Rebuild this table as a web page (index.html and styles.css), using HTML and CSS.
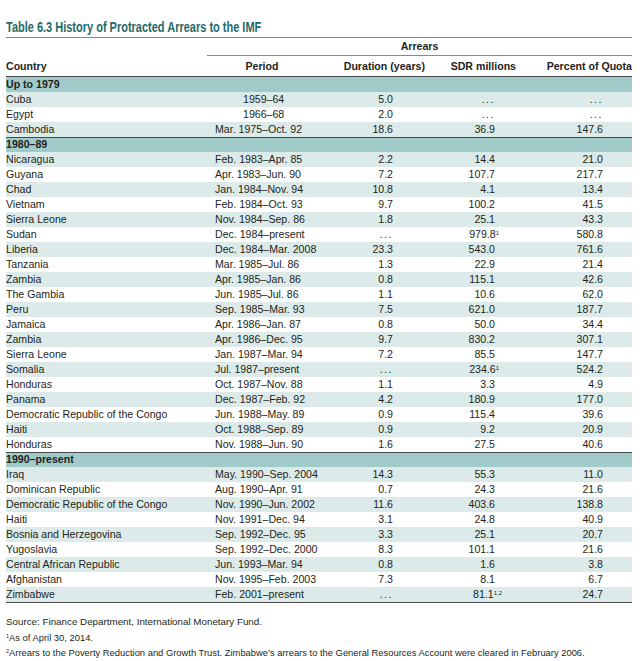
FILE: index.html
```html
<!DOCTYPE html>
<html lang="en">
<head>
    <meta charset="UTF-8">
    <meta name="viewport" content="width=device-width, initial-scale=1.0">
    <title>Table 6.3 History of Protracted Arrears to the IMF</title>
    <link rel="stylesheet" href="styles.css">
</head>
<body>
    <div class="page">
        <h1 class="title"><span class="title-text">Table 6.3 History of Protracted Arrears to the IMF</span></h1>

        <table class="arrears">
            <colgroup>
                <col class="col-country">
                <col class="col-period">
                <col class="col-duration">
                <col class="col-sdr">
                <col class="col-quota">
            </colgroup>
            <thead>
                <tr class="group-head">
                    <th></th>
                    <th colspan="4" class="arrears-label">Arrears</th>
                </tr>
                <tr class="col-head">
                    <th class="country">Country</th>
                    <th class="period-head">Period</th>
                    <th class="duration-head">Duration (years)</th>
                    <th class="sdr-head">SDR millions</th>
                    <th class="quota-head">Percent of Quota</th>
                </tr>
            </thead>
            <tbody class="group first">
                <tr class="section"><td colspan="5">Up to 1979</td></tr>
                <tr><td>Cuba</td><td class="period short">1959–64</td><td class="duration">5.0</td><td class="sdr"><span class="na">...</span></td><td class="quota"><span class="na">...</span></td></tr>
                <tr><td>Egypt</td><td class="period short">1966–68</td><td class="duration">2.0</td><td class="sdr"><span class="na">...</span></td><td class="quota"><span class="na">...</span></td></tr>
                <tr><td>Cambodia</td><td class="period">Mar. 1975–Oct. 92</td><td class="duration">18.6</td><td class="sdr">36.9</td><td class="quota">147.6</td></tr>
            </tbody>
            <tbody class="group">
                <tr class="section"><td colspan="5">1980–89</td></tr>
                <tr><td>Nicaragua</td><td class="period">Feb. 1983–Apr. 85</td><td class="duration">2.2</td><td class="sdr">14.4</td><td class="quota">21.0</td></tr>
                <tr><td>Guyana</td><td class="period">Apr. 1983–Jun. 90</td><td class="duration">7.2</td><td class="sdr">107.7</td><td class="quota">217.7</td></tr>
                <tr><td>Chad</td><td class="period">Jan. 1984–Nov. 94</td><td class="duration">10.8</td><td class="sdr">4.1</td><td class="quota">13.4</td></tr>
                <tr><td>Vietnam</td><td class="period">Feb. 1984–Oct. 93</td><td class="duration">9.7</td><td class="sdr">100.2</td><td class="quota">41.5</td></tr>
                <tr><td>Sierra Leone</td><td class="period">Nov. 1984–Sep. 86</td><td class="duration">1.8</td><td class="sdr">25.1</td><td class="quota">43.3</td></tr>
                <tr><td>Sudan</td><td class="period">Dec. 1984–present</td><td class="duration"><span class="na">...</span></td><td class="sdr">979.8<sup class="fn">1</sup></td><td class="quota">580.8</td></tr>
                <tr><td>Liberia</td><td class="period">Dec. 1984–Mar. 2008</td><td class="duration">23.3</td><td class="sdr">543.0</td><td class="quota">761.6</td></tr>
                <tr><td>Tanzania</td><td class="period">Mar. 1985–Jul. 86</td><td class="duration">1.3</td><td class="sdr">22.9</td><td class="quota">21.4</td></tr>
                <tr><td>Zambia</td><td class="period">Apr. 1985–Jan. 86</td><td class="duration">0.8</td><td class="sdr">115.1</td><td class="quota">42.6</td></tr>
                <tr><td>The Gambia</td><td class="period">Jun. 1985–Jul. 86</td><td class="duration">1.1</td><td class="sdr">10.6</td><td class="quota">62.0</td></tr>
                <tr><td>Peru</td><td class="period">Sep. 1985–Mar. 93</td><td class="duration">7.5</td><td class="sdr">621.0</td><td class="quota">187.7</td></tr>
                <tr><td>Jamaica</td><td class="period">Apr. 1986–Jan. 87</td><td class="duration">0.8</td><td class="sdr">50.0</td><td class="quota">34.4</td></tr>
                <tr><td>Zambia</td><td class="period">Apr. 1986–Dec. 95</td><td class="duration">9.7</td><td class="sdr">830.2</td><td class="quota">307.1</td></tr>
                <tr><td>Sierra Leone</td><td class="period">Jan. 1987–Mar. 94</td><td class="duration">7.2</td><td class="sdr">85.5</td><td class="quota">147.7</td></tr>
                <tr><td>Somalia</td><td class="period">Jul. 1987–present</td><td class="duration"><span class="na">...</span></td><td class="sdr">234.6<sup class="fn">1</sup></td><td class="quota">524.2</td></tr>
                <tr><td>Honduras</td><td class="period">Oct. 1987–Nov. 88</td><td class="duration">1.1</td><td class="sdr">3.3</td><td class="quota">4.9</td></tr>
                <tr><td>Panama</td><td class="period">Dec. 1987–Feb. 92</td><td class="duration">4.2</td><td class="sdr">180.9</td><td class="quota">177.0</td></tr>
                <tr><td>Democratic Republic of the Congo</td><td class="period">Jun. 1988–May. 89</td><td class="duration">0.9</td><td class="sdr">115.4</td><td class="quota">39.6</td></tr>
                <tr><td>Haiti</td><td class="period">Oct. 1988–Sep. 89</td><td class="duration">0.9</td><td class="sdr">9.2</td><td class="quota">20.9</td></tr>
                <tr><td>Honduras</td><td class="period">Nov. 1988–Jun. 90</td><td class="duration">1.6</td><td class="sdr">27.5</td><td class="quota">40.6</td></tr>
            </tbody>
            <tbody class="group last">
                <tr class="section"><td colspan="5">1990–present</td></tr>
                <tr><td>Iraq</td><td class="period">May. 1990–Sep. 2004</td><td class="duration">14.3</td><td class="sdr">55.3</td><td class="quota">11.0</td></tr>
                <tr><td>Dominican Republic</td><td class="period">Aug. 1990–Apr. 91</td><td class="duration">0.7</td><td class="sdr">24.3</td><td class="quota">21.6</td></tr>
                <tr><td>Democratic Republic of the Congo</td><td class="period">Nov. 1990–Jun. 2002</td><td class="duration">11.6</td><td class="sdr">403.6</td><td class="quota">138.8</td></tr>
                <tr><td>Haiti</td><td class="period">Nov. 1991–Dec. 94</td><td class="duration">3.1</td><td class="sdr">24.8</td><td class="quota">40.9</td></tr>
                <tr><td>Bosnia and Herzegovina</td><td class="period">Sep. 1992–Dec. 95</td><td class="duration">3.3</td><td class="sdr">25.1</td><td class="quota">20.7</td></tr>
                <tr><td>Yugoslavia</td><td class="period">Sep. 1992–Dec. 2000</td><td class="duration">8.3</td><td class="sdr">101.1</td><td class="quota">21.6</td></tr>
                <tr><td>Central African Republic</td><td class="period">Jun. 1993–Mar. 94</td><td class="duration">0.8</td><td class="sdr">1.6</td><td class="quota">3.8</td></tr>
                <tr><td>Afghanistan</td><td class="period">Nov. 1995–Feb. 2003</td><td class="duration">7.3</td><td class="sdr">8.1</td><td class="quota">6.7</td></tr>
                <tr><td>Zimbabwe</td><td class="period">Feb. 2001–present</td><td class="duration"><span class="na">...</span></td><td class="sdr">81.1<sup class="fn fn-two">1,2</sup></td><td class="quota">24.7</td></tr>
            </tbody>
        </table>

        <div class="notes">
            <p class="source">Source: Finance Department, International Monetary Fund.</p>
            <p><sup>1</sup>As of April 30, 2014.</p>
            <p><sup>2</sup>Arrears to the Poverty Reduction and Growth Trust. Zimbabwe’s arrears to the General Resources Account were cleared in February 2006.</p>
        </div>
    </div>
</body>
</html>
```

FILE: styles.css
```css
/* Table 6.3 page */
:root {
    --title-color: #1d6b6a;
    --text-color: #231f20;
    --band-color: #a0cbc9;
    --stripe-color: #dcebe9;
    --rule-light: #8a8a8a;
    --rule-dark: #4a4a4a;
}

body {
    margin: 0;
    background-color: #FFFFFF;
    color: var(--text-color);
    font-family: 'Liberation Sans', Arial, sans-serif;
    font-size: 10.6px;
}

.page {
    padding: 18px 8px 0 6px;
}

.title {
    margin: 0;
    padding-bottom: 1px;
    border-bottom: 1px solid var(--rule-light);
    font-size: 14px;
    line-height: 18px;
    color: var(--title-color);
    white-space: nowrap;
}

.title-text {
    display: inline-block;
    font-family: 'Liberation Sans Narrow', 'Liberation Sans', sans-serif;
    font-weight: bold;
    transform-origin: left center;
    transform: scaleX(0.785);
}

.arrears {
    width: 626px;
    border-collapse: collapse;
    table-layout: fixed;
}

.col-country { width: 201px; }
.col-period { width: 110px; }
.col-duration { width: 113px; }
.col-sdr { width: 110px; }
.col-quota { width: 92px; }

.arrears th,
.arrears td {
    padding: 0;
    height: 15px;
    line-height: 15px;
    white-space: nowrap;
    overflow: visible;
}

.arrears th {
    font-weight: bold;
}

.group-head th {
    height: 17px;
    line-height: 17px;
}

.arrears-label {
    text-align: center;
    border-bottom: 1px solid var(--rule-light);
}

.col-head th {
    height: 19px;
    line-height: 19px;
    padding-top: 1px;
    border-bottom: 1px solid var(--rule-dark);
}

.col-head .country { text-align: left; }
.period-head { text-align: center; }

.col-head .duration-head,
.col-head .sdr-head,
.col-head .quota-head {
    text-align: right;
}

.col-head .duration-head { padding-right: 5px; }
.col-head .sdr-head { padding-right: 24px; }
.col-head .quota-head { padding-right: 0; }

.section td {
    background-color: var(--band-color);
    font-weight: bold;
}

.group + .group .section td {
    box-shadow: inset 0 1px 0 var(--rule-dark);
}

.group tr:nth-child(even) {
    background-color: var(--stripe-color);
}

.group.last tr:last-child td {
    border-bottom: 1px solid var(--rule-dark);
}

.arrears .period {
    padding-left: 8px;
}

.arrears .period.short {
    padding-left: 36px;
}

.duration,
.sdr,
.quota {
    text-align: right;
}

.arrears .duration { padding-right: 37px; }
.arrears .sdr { padding-right: 45px; }
.arrears .quota { padding-right: 29px; }

.na {
    letter-spacing: 1.5px;
}

.fn {
    font-size: 6px;
    line-height: 0;
    vertical-align: 3px;
    margin-right: -4px;
}

.fn-two {
    margin-right: -7px;
}

.notes {
    margin-top: 11px;
    font-size: 9.4px;
}

.notes p {
    margin: 0;
    line-height: 15.5px;
}

.notes .source {
    font-size: 9.8px;
}

.notes sup {
    font-size: 5.5px;
    line-height: 0;
    vertical-align: 3px;
}
```
